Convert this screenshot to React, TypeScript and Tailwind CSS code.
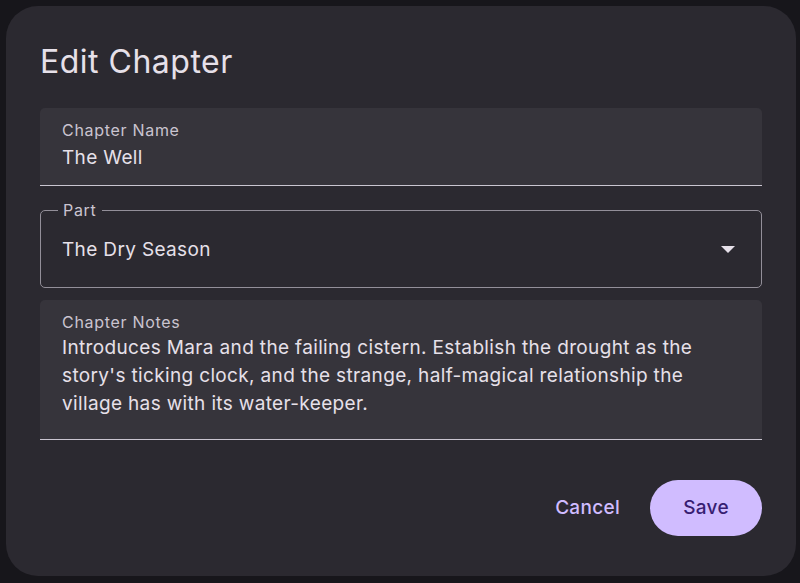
import { useState } from 'react'

const font = { fontFamily: 'Inter, "Noto Sans", sans-serif' }

function FilledField({ label, children }: { label: string; children: React.ReactNode }) {
  return (
    <div className="rounded-t-[5px] border-b border-[#c9c5d0] bg-[#36343b] px-[22px] pt-[12px]">
      <div className="text-[16px] leading-[20px] tracking-[0.7px] text-[#cac4d0]">{label}</div>
      {children}
    </div>
  )
}

function DropArrow() {
  return (
    <svg width="14" height="7" viewBox="0 0 14 7" className="shrink-0">
      <path d="M0 0h14L7 7z" fill="#e6e0e9" />
    </svg>
  )
}

export default function App() {
  const [name] = useState('The Well')
  const [part] = useState('The Dry Season')
  const [notes] = useState(
    "Introduces Mara and the failing cistern. Establish the drought as the story's ticking clock, and the strange, half-magical relationship the village has with its water-keeper."
  )

  return (
    <div className="h-[583px] w-[800px] bg-[#17161b] pt-[6px] pr-[4px] pl-[6px]" style={font}>
      <div className="flex h-[570px] flex-col rounded-[32px] bg-[#2b2930] px-[34px] pt-[36px]">
        <h2 className="text-[32px] leading-[40px] tracking-[0.5px] text-[#e6e0e9]">Edit Chapter</h2>

        {/* Chapter name */}
        <div className="mt-[26px]">
          <FilledField label="Chapter Name">
            <div className="mt-[4px] pb-[13px] text-[19px] leading-[28px] tracking-[0.35px] text-[#e6e0e9]">
              {name}
            </div>
          </FilledField>
        </div>

        {/* Part select */}
        <fieldset className="mt-[16px] rounded-[5px] border border-[#938f99] pb-[6px]">
          <legend className="ml-[17px] px-[5px] text-[16px] leading-[16px] tracking-[0.7px] text-[#cac4d0]">
            Part
          </legend>
          <div className="flex h-[63px] items-center justify-between pr-[26px] pl-[21px]">
            <span className="text-[19px] leading-[28px] tracking-[0.35px] text-[#e6e0e9]">{part}</span>
            <DropArrow />
          </div>
        </fieldset>

        {/* Notes */}
        <div className="mt-[12px]">
          <FilledField label="Chapter Notes">
            <p className="mt-[2px] pb-[21px] text-[19px] leading-[28px] tracking-[0.35px] text-[#e6e0e9]">
              {notes}
            </p>
          </FilledField>
        </div>

        <div className="mt-[40px] flex items-center justify-end gap-[8px]">
          <button className="h-[56px] rounded-full px-[22px] text-[19px] font-medium tracking-[0.3px] text-[#d0bcff]">
            Cancel
          </button>
          <button className="h-[56px] w-[112px] rounded-full bg-[#d0bcff] text-[19px] font-medium tracking-[0.3px] text-[#381e72]">
            Save
          </button>
        </div>
      </div>
    </div>
  )
}
